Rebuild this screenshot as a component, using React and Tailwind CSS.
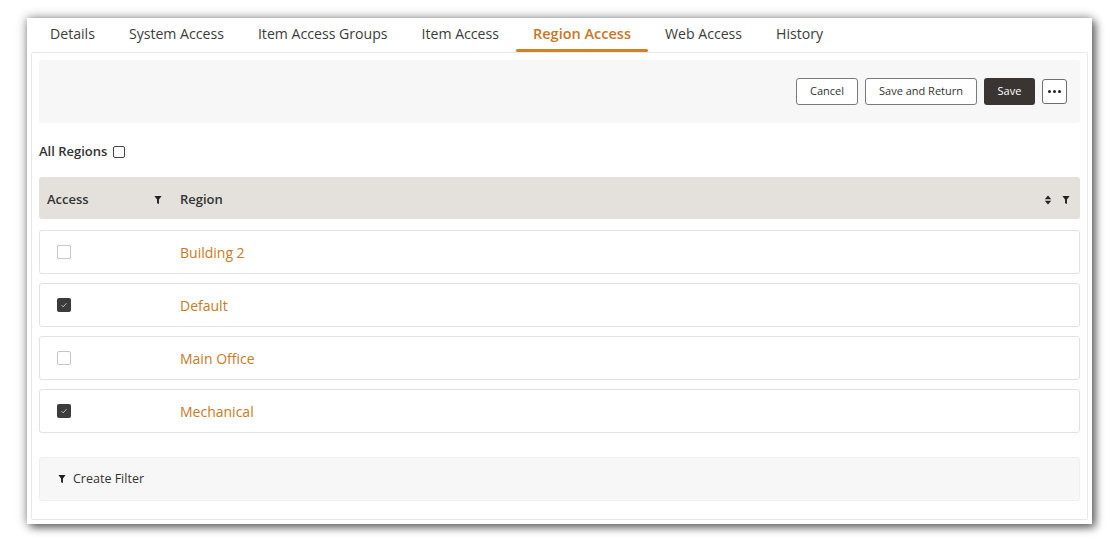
import React from "react";

const Funnel = ({ className = "" }) => (
  <svg viewBox="0 0 10 12" className={className} fill="currentColor">
    <path d="M0.5 1h9L6.2 5.5V11L3.8 10V5.5z" />
  </svg>
);

const SortIcon = ({ className = "" }) => (
  <svg viewBox="0 0 10 12" className={className} fill="currentColor">
    <path d="M5 0.5L9 5H1z" />
    <path d="M5 11.5L9 7H1z" />
  </svg>
);

const Check = ({ checked }) =>
  checked ? (
    <div className="w-[14px] h-[14px] rounded-[2px] bg-[#3b3b3b] flex items-center justify-center">
      <svg viewBox="0 0 12 12" className="w-[10px] h-[10px]" fill="none" stroke="#d8d8d8" strokeWidth="1">
        <path d="M3 6.2l2 2 4-4.4" />
      </svg>
    </div>
  ) : (
    <div className="w-[14px] h-[14px] rounded-[2px] border border-[#c6c6c6] bg-white" />
  );

const tabs = ["Details", "System Access", "Item Access Groups", "Item Access", "Region Access", "Web Access", "History"];
const rows = [
  { name: "Building 2", checked: false },
  { name: "Default", checked: true },
  { name: "Main Office", checked: false },
  { name: "Mechanical", checked: true },
];

export default function App() {
  return (
    <div
      className="w-[1113px] h-[545px] bg-white pl-[27px] pt-[18px]"
      style={{ fontFamily: '"Open Sans", "Noto Sans", sans-serif' }}
    >
      <div className="w-[1065px] h-[506px] bg-white shadow-[0_0_10px_rgba(0,0,0,0.45),4px_4px_8px_rgba(0,0,0,0.45)] flex flex-col">
        <div className="h-[34px] flex items-stretch pl-[6px]">
          {tabs.map((t) => {
            const active = t === "Region Access";
            return (
              <div key={t} className="relative px-[17px] pb-[2px] flex items-center">
                <span
                  className={
                    active
                      ? "text-[14.5px] font-semibold text-[#c8771f]"
                      : "text-[14.125px] text-[#3c3c3c]"
                  }
                >
                  {t}
                </span>
                {active && (
                  <div className="absolute left-0 right-0 bottom-0 h-[3px] rounded-full bg-[#d27f26]" />
                )}
              </div>
            );
          })}
        </div>
        <div className="ml-[4px] w-[1057px] h-[468px] border border-[#e8e8e8] rounded-[2px] px-[7px] pt-[7px] flex flex-col">
          <div className="h-[63px] bg-[#f7f7f7] rounded-[3px] flex items-center justify-end gap-[7px] pr-[13px]">
            <button className="h-[27px] px-[13px] rounded-[3px] border border-[#7a7a7a] bg-white text-[11px] text-[#333]">
              Cancel
            </button>
            <button className="h-[27px] px-[13px] rounded-[3px] border border-[#7a7a7a] bg-white text-[11px] text-[#333]">
              Save and Return
            </button>
            <button className="h-[27px] w-[51px] rounded-[3px] bg-[#3a3532] text-[11px] text-white">
              Save
            </button>
            <button className="h-[25px] w-[25px] rounded-[3px] border border-[#6f6f6f] bg-white flex items-center justify-center gap-[2px]">
              <span className="w-[3px] h-[3px] rounded-full bg-[#222]" />
              <span className="w-[3px] h-[3px] rounded-full bg-[#222]" />
              <span className="w-[3px] h-[3px] rounded-full bg-[#222]" />
            </button>
          </div>
          <div className="h-[54px] pt-[3px] flex items-center gap-[6px]">
            <span className="text-[13px] font-semibold text-[#333]">All Regions</span>
            <div className="w-[12px] h-[12px] rounded-[2px] border border-[#444] bg-white" />
          </div>
          <div className="h-[42px] pt-[3px] bg-[#e4e1dd] rounded-[3px] flex items-center">
            <div className="w-[141px] pl-[8px] pr-[18px] flex items-center justify-between">
              <span className="text-[13px] font-semibold text-[#333]">Access</span>
              <Funnel className="w-[8px] h-[10px] text-[#222]" />
            </div>
            <span className="flex-1 text-[13px] font-semibold text-[#333]">Region</span>
            <div className="flex items-center gap-[10px] pr-[10px]">
              <SortIcon className="w-[8px] h-[10px] text-[#222]" />
              <Funnel className="w-[8px] h-[10px] text-[#222]" />
            </div>
          </div>
          <div className="mt-[11px] flex flex-col gap-[9px]">
            {rows.map((r) => (
              <div
                key={r.name}
                className="h-[44px] border border-[#e2e2e2] rounded-[3px] bg-white flex items-center"
              >
                <div className="w-[140px] pl-[17px]">
                  <Check checked={r.checked} />
                </div>
                <span className="text-[14px] text-[#c87a24]">{r.name}</span>
              </div>
            ))}
          </div>
          <div className="mt-[24px] h-[44px] bg-[#f7f7f7] border border-[#efefef] rounded-[3px] flex items-center pl-[18px] gap-[7px]">
            <Funnel className="w-[8px] h-[10px] text-[#222]" />
            <span className="text-[12.5px] text-[#333]">Create Filter</span>
          </div>
        </div>
      </div>
    </div>
  );
}
